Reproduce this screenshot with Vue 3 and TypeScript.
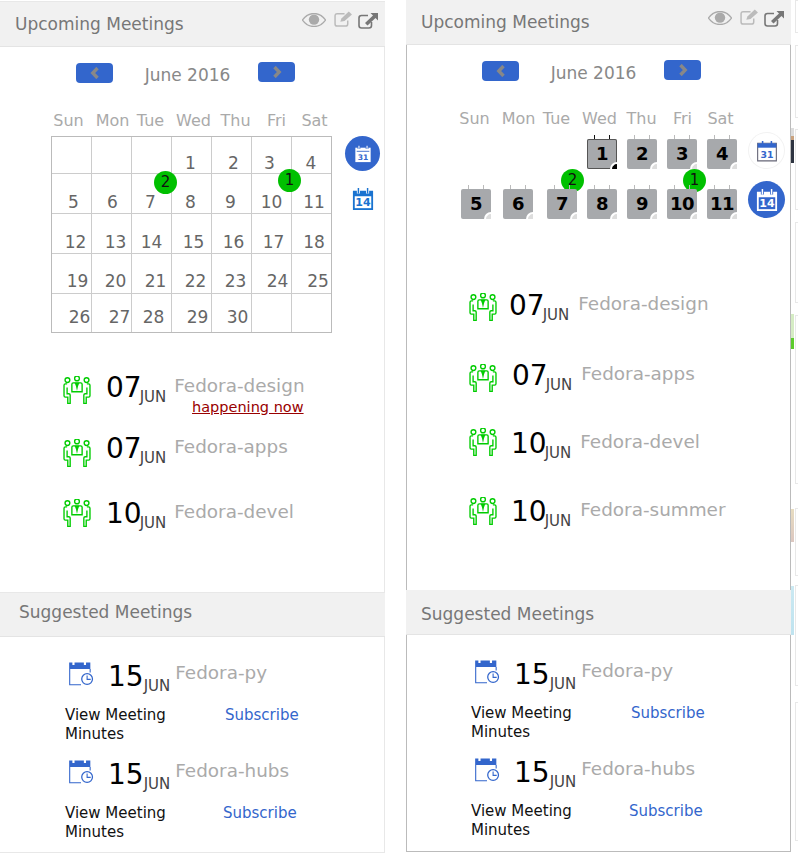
<script setup lang="ts">
const weekdays = [
  { label: "Sun", dx: 0 },
  { label: "Mon", dx: 3 },
  { label: "Tue", dx: 0 },
  { label: "Wed", dx: 2 },
  { label: "Thu", dx: 3 },
  { label: "Fri", dx: 3 },
  { label: "Sat", dx: 0 },
];

// grid cells of the left calendar, the second value nudges the number off the cell centre
const gridRows = [
  { height: 37, dy: 5, cells: [null, null, null, [1, -1], [2, 2], [3, -2], [4, -1]] },
  { height: 40, dy: 4, cells: [[5, 2], [6, 1], [7, -1], [8, -1], [9, -1], [10, 0], [11, 2]] },
  { height: 40, dy: 4, cells: [[12, 4], [13, 4], [14, 0], [15, 2], [16, 2], [17, 2], [18, 2]] },
  { height: 40, dy: 3, cells: [[19, 6], [20, 4], [21, 4], [22, 4], [23, 4], [24, 6], [25, 6]] },
  { height: 38, dy: 0, cells: [[26, 8], [27, 8], [28, 2], [29, 6], [30, 6], null, null] },
];

const gridBadges = [
  { n: 2, x: 102, y: 34 },
  { n: 1, x: 226, y: 32 },
];
const tileBadges = [
  { n: 2, x: 155, y: 40 },
  { n: 1, x: 277, y: 40 },
];

const tileRows = [
  [
    { n: 1, left: 181, active: true },
    { n: 2, left: 10 },
    { n: 3, left: 10 },
    { n: 4, left: 10 },
  ],
  [
    { n: 5, left: 55 },
    { n: 6, left: 12 },
    { n: 7, left: 14 },
    { n: 8, left: 10 },
    { n: 9, left: 10 },
    { n: 10, left: 10 },
    { n: 11, left: 10 },
  ],
];

const leftMeetings = [
  { day: "07", name: "Fedora-design", top: 38, icon: 5, gap: 15, now: true },
  { day: "07", name: "Fedora-apps", top: 15, icon: 7, gap: 15 },
  { day: "10", name: "Fedora-devel", top: 19, icon: 2, gap: 15 },
];
const rightMeetings = [
  { day: "07", name: "Fedora-design", top: 66, icon: 4, gap: 12 },
  { day: "07", name: "Fedora-apps", top: 28, icon: 5, gap: 15 },
  { day: "10", name: "Fedora-devel", top: 26, icon: 1, gap: 14 },
  { day: "10", name: "Fedora-summer", top: 26, icon: 2, gap: 14 },
];

const suggested = [
  { day: "15", name: "Fedora-py", subLeft: 0 },
  { day: "15", name: "Fedora-hubs", subLeft: -2 },
];

// sliver of the next column that shows at the window's right edge
const strip = [
  { top: 0, height: 33 },
  { top: 12, height: 73 },
  { top: 11, height: 81, thumb: "linear-gradient(#ddd 0 22%, #c9a27e 22% 35%, #2d3340 35%)", thumbTop: -2, thumbHeight: 35 },
  { top: 12, height: 81 },
  { top: 12, height: 169, thumb: "linear-gradient(#d5ecc4 0 70%, #5ccb2c 70%)", thumbTop: -2, thumbHeight: 35 },
  { top: 24, height: 68, thumb: "linear-gradient(#e7dcc0, #dcc7c0)", thumbTop: 0, thumbHeight: 33 },
  { top: 9, height: 101, thumb: "linear-gradient(#cbe9f2, #bfe3ef)", thumbTop: 0, thumbHeight: 49 },
  { top: 16, height: 139 },
];
</script>

<template>
  <div class="page">
    <!-- left panel: grid calendar -->
    <section class="panel panel-left">
      <header class="head">
        <span>Upcoming Meetings</span>
        <div class="tools">
          <svg class="eye" viewBox="0 0 24 14"><path d="M0.5 7C4 2 8 .5 12 .5S20 2 23.5 7C20 12 16 13.5 12 13.5S4 12 .5 7Z" fill="none" stroke="#aaa" stroke-width="1.3"/><circle cx="12" cy="6.6" r="5.2" fill="#aaa"/></svg>
          <svg class="edit" viewBox="0 0 18 15"><path d="M10 2.5H3Q1 2.5 1 4.5V12.2Q1 14.2 3 14.2H11Q13 14.2 13 12.2V9" fill="none" stroke="#bbb" stroke-width="1.4"/><path d="M6 10L7 7L14 0.5L17 3.2L10 9.5Z" fill="#bbb"/></svg>
          <svg class="ext" viewBox="0 0 20 17"><path d="M10 3.5H3.5Q1 3.5 1 6V13.5Q1 16 3.5 16H11Q13.5 16 13.5 13.5V10" fill="none" stroke="#777" stroke-width="1.6"/><path d="M7 11L15 3.5L12.5 1H20V8.5L17.5 6L9.5 13.5Z" fill="#777"/></svg>
        </div>
      </header>
      <div class="body upcoming">
        <div class="month">
          <button class="nav"><svg viewBox="0 0 10 12"><path d="M7.5 1L2.8 6L7.5 11" fill="none" stroke="#888" stroke-width="3.4"/></svg></button>
          <span class="month-name">June 2016</span>
          <button class="nav nav-next"><svg viewBox="0 0 10 12"><path d="M2.5 1L7.2 6L2.5 11" fill="none" stroke="#888" stroke-width="3.4"/></svg></button>
        </div>
        <div class="weekdays"><span v-for="d in weekdays" :key="d.label" :style="{ transform: `translateX(${d.dx}px)` }">{{ d.label }}</span></div>

        <div class="cal-wrap">
          <div class="grid">
            <div v-for="(row, r) in gridRows" :key="r" class="grid-row" :style="{ height: row.height + 'px' }">
              <div v-for="(cell, c) in row.cells" :key="c" class="grid-cell">
                <span v-if="cell" :style="{ transform: `translate(${cell[1]}px, ${row.dy}px)` }">{{ cell[0] }}</span>
              </div>
            </div>
            <i v-for="b in gridBadges" :key="b.n" class="badge" :style="{ left: b.x + 'px', top: b.y + 'px' }">{{ b.n }}</i>
          </div>
          <div class="views">
            <span class="view-btn view-on">
              <svg viewBox="0 0 20 20"><path d="M1.5 3H18.5V19H1.5Z" fill="#fff"/><path d="M3 7H17" stroke="#3366cc" stroke-width="1"/><path d="M5.5 .8V4.5M14.5 .8V4.5" stroke="#3366cc" stroke-width="3"/><path d="M5.5 .8V4.5M14.5 .8V4.5" stroke="#fff" stroke-width="1.2"/><text x="10" y="16.6" class="ico-num" fill="#3366cc">31</text></svg>
            </span>
            <span class="view-btn view-14-plain">
              <svg viewBox="0 0 24 26"><path d="M1 4H23V25H1Z" fill="#1a73d0"/><rect x="3" y="10" width="18" height="13" fill="#fff"/><path d="M7 1V7M17 1V7" stroke="#fff" stroke-width="3.4"/><path d="M7 1V7M17 1V7" stroke="#1a73d0" stroke-width="1.6"/><text x="12" y="21" class="ico-num big" fill="#1a73d0">14</text></svg>
            </span>
          </div>
        </div>

        <div v-for="m in leftMeetings" :key="m.name" class="meeting" :style="{ marginTop: m.top + 'px' }">
          <svg class="people" viewBox="24 26 82 82" :style="{ marginTop: m.icon + 'px' }">
            <g fill="none" stroke="#00cc00" stroke-width="4">
              <circle cx="37" cy="38" r="7"/><circle cx="65" cy="33" r="7"/><circle cx="93" cy="38" r="7"/>
              <path d="M36 49H31Q27 49 27 53V84Q27 88 31 88H38V106H45V82Q45 78 41 78H36V60"/>
              <path d="M94 49H99Q103 49 103 53V84Q103 88 99 88H92V106H85V82Q85 78 89 78H94V60"/>
              <path d="M50 72V50Q50 46 54 46H76Q80 46 80 50V72Z"/>
            </g>
            <path d="M58 46H72L68 56L65 70L62 56Z" fill="#00cc00"/>
          </svg>
          <span class="day" :style="{ marginLeft: m.gap + 'px' }">{{ m.day }}</span><span class="mon">JUN</span>
          <div class="name-col">
            <span class="name">{{ m.name }}</span>
            <a v-if="m.now" class="now">happening now</a>
          </div>
        </div>
      </div>
      <header class="head head-second">Suggested Meetings</header>
      <div class="body suggested">
        <div v-for="s in suggested" :key="s.name" class="sug">
          <div class="sug-top">
            <svg class="cal-clock" viewBox="24 20 72 78">
              <path d="M27 45V27H36V34H42V27H68V34H74V27H86V45Z" fill="#3366cc"/>
              <path d="M28.5 45V89H60M85.5 45V55" fill="none" stroke="#3366cc" stroke-width="3"/>
              <circle cx="77" cy="73" r="15" fill="#fff" stroke="#3366cc" stroke-width="3.5"/>
              <path d="M77 63V74H87" fill="none" stroke="#3366cc" stroke-width="3"/>
            </svg>
            <span class="day">{{ s.day }}</span><span class="mon">JUN</span>
            <span class="name">{{ s.name }}</span>
          </div>
          <div class="sug-links">
            <a class="minutes">View Meeting Minutes</a>
            <a class="subscribe" :style="{ marginLeft: s.subLeft + 'px' }">Subscribe</a>
          </div>
        </div>
      </div>
    </section>

    <!-- right panel: tile calendar -->
    <section class="panel panel-right">
      <header class="head">
        <span>Upcoming Meetings</span>
        <div class="tools">
          <svg class="eye" viewBox="0 0 24 14"><path d="M0.5 7C4 2 8 .5 12 .5S20 2 23.5 7C20 12 16 13.5 12 13.5S4 12 .5 7Z" fill="none" stroke="#aaa" stroke-width="1.3"/><circle cx="12" cy="6.6" r="5.2" fill="#aaa"/></svg>
          <svg class="edit" viewBox="0 0 18 15"><path d="M10 2.5H3Q1 2.5 1 4.5V12.2Q1 14.2 3 14.2H11Q13 14.2 13 12.2V9" fill="none" stroke="#bbb" stroke-width="1.4"/><path d="M6 10L7 7L14 0.5L17 3.2L10 9.5Z" fill="#bbb"/></svg>
          <svg class="ext" viewBox="0 0 20 17"><path d="M10 3.5H3.5Q1 3.5 1 6V13.5Q1 16 3.5 16H11Q13.5 16 13.5 13.5V10" fill="none" stroke="#777" stroke-width="1.6"/><path d="M7 11L15 3.5L12.5 1H20V8.5L17.5 6L9.5 13.5Z" fill="#777"/></svg>
        </div>
      </header>
      <div class="body upcoming">
        <div class="month">
          <button class="nav"><svg viewBox="0 0 10 12"><path d="M7.5 1L2.8 6L7.5 11" fill="none" stroke="#888" stroke-width="3.4"/></svg></button>
          <span class="month-name">June 2016</span>
          <button class="nav nav-next"><svg viewBox="0 0 10 12"><path d="M2.5 1L7.2 6L2.5 11" fill="none" stroke="#888" stroke-width="3.4"/></svg></button>
        </div>
        <div class="weekdays"><span v-for="d in weekdays" :key="d.label" :style="{ transform: `translateX(${d.dx}px)` }">{{ d.label }}</span></div>

        <div class="tiles-wrap">
          <div v-for="(row, r) in tileRows" :key="r" class="tile-row">
            <div v-for="t in row" :key="t.n" class="tile" :class="{ active: t.active }" :style="{ marginLeft: t.left + 'px' }">{{ t.n }}</div>
          </div>
          <i v-for="b in tileBadges" :key="b.n" class="badge" :style="{ left: b.x + 'px', top: b.y + 'px' }">{{ b.n }}</i>
          <span class="view-btn view-plain">
            <svg viewBox="0 0 20 20"><path d="M1.5 3H18.5V19H1.5Z" fill="#fff" stroke="#667" stroke-width="1"/><path d="M1.5 3H18.5V7H1.5Z" fill="#3366cc"/><path d="M6 1V4M14 1V4" stroke="#3366cc" stroke-width="1.4"/><text x="10" y="16.6" class="ico-num" fill="#3366cc">31</text></svg>
          </span>
          <span class="view-btn view-on view-14">
            <svg viewBox="0 0 24 26"><path d="M1 4H23V25H1Z" fill="#fff"/><rect x="3" y="10" width="18" height="13" fill="#3366cc"/><path d="M7 1V7M17 1V7" stroke="#3366cc" stroke-width="3.4"/><path d="M7 1V7M17 1V7" stroke="#fff" stroke-width="1.6"/><text x="12" y="21" class="ico-num big" fill="#fff">14</text></svg>
          </span>
        </div>

        <div v-for="m in rightMeetings" :key="m.name" class="meeting meeting-plain" :style="{ marginTop: m.top + 'px' }">
          <svg class="people" viewBox="24 26 82 82" :style="{ marginTop: m.icon + 'px' }">
            <g fill="none" stroke="#00cc00" stroke-width="4">
              <circle cx="37" cy="38" r="7"/><circle cx="65" cy="33" r="7"/><circle cx="93" cy="38" r="7"/>
              <path d="M36 49H31Q27 49 27 53V84Q27 88 31 88H38V106H45V82Q45 78 41 78H36V60"/>
              <path d="M94 49H99Q103 49 103 53V84Q103 88 99 88H92V106H85V82Q85 78 89 78H94V60"/>
              <path d="M50 72V50Q50 46 54 46H76Q80 46 80 50V72Z"/>
            </g>
            <path d="M58 46H72L68 56L65 70L62 56Z" fill="#00cc00"/>
          </svg>
          <span class="day" :style="{ marginLeft: m.gap + 'px' }">{{ m.day }}</span><span class="mon">JUN</span>
          <div class="name-col"><span class="name">{{ m.name }}</span></div>
        </div>
      </div>
      <header class="head head-second">Suggested Meetings</header>
      <div class="body suggested">
        <div v-for="s in suggested" :key="s.name" class="sug">
          <div class="sug-top">
            <svg class="cal-clock" viewBox="24 20 72 78">
              <path d="M27 45V27H36V34H42V27H68V34H74V27H86V45Z" fill="#3366cc"/>
              <path d="M28.5 45V89H60M85.5 45V55" fill="none" stroke="#3366cc" stroke-width="3"/>
              <circle cx="77" cy="73" r="15" fill="#fff" stroke="#3366cc" stroke-width="3.5"/>
              <path d="M77 63V74H87" fill="none" stroke="#3366cc" stroke-width="3"/>
            </svg>
            <span class="day">{{ s.day }}</span><span class="mon">JUN</span>
            <span class="name">{{ s.name }}</span>
          </div>
          <div class="sug-links">
            <a class="minutes">View Meeting Minutes</a>
            <a class="subscribe" :style="{ marginLeft: s.subLeft + 'px' }">Subscribe</a>
          </div>
        </div>
      </div>
    </section>

    <div class="strip">
      <div v-for="(b, i) in strip" :key="i" class="strip-box" :style="{ marginTop: b.top + 'px', height: b.height + 'px' }">
        <span v-if="b.thumb" class="thumb" :style="{ background: b.thumb, top: b.thumbTop + 'px', height: b.thumbHeight + 'px' }"></span>
      </div>
    </div>
  </div>
</template>

<style>
html, body { margin: 0; background: #fff; overflow: hidden; }
</style>

<style scoped>
.page {
  display: flex;
  align-items: flex-start;
  gap: 21px;
  width: 798px;
  height: 853px;
  overflow: hidden;
  font-family: "DejaVu Sans", sans-serif;
  background: #fff;
}

.panel { position: relative; width: 385px; flex: none; }
.panel-left { height: 853px; padding-top: 2px; box-sizing: border-box; }
.panel-left::before {
  content: "";
  position: absolute;
  left: 0;
  right: 0;
  top: 1px;
  bottom: 0;
  border-top: 1px solid #e8e8e8;
  border-right: 1px solid #e8e8e8;
  border-bottom: 1px solid #e8e8e8;
  pointer-events: none;
}
.panel-right { height: 852px; }
.panel-right::before {
  content: "";
  position: absolute;
  left: 0;
  right: 0;
  top: 32px;
  bottom: 0;
  border: 1px solid #bbb;
  pointer-events: none;
}

.head {
  display: flex;
  align-items: center;
  justify-content: space-between;
  box-sizing: border-box;
  height: 45px;
  padding: 0 7px 0 15px;
  background: #f1f1f1;
  border-bottom: 1px solid #e4e4e4;
  color: #777;
  font-size: 17px;
  position: relative;
  z-index: 1;
}
.tools { display: flex; align-items: flex-start; height: 30px; }
.eye { width: 24px; height: 14px; margin-top: 4px; }
.edit { width: 19px; height: 16px; margin: 2px 0 0 8px; }
.ext { width: 20px; height: 17px; margin: 3px 0 0 5px; }

.upcoming { height: 545px; }
.month { position: relative; display: flex; align-items: center; height: 22px; padding: 15px 0 0 76px; }
.nav {
  width: 37px;
  height: 20px;
  padding: 0;
  border: 0;
  border-radius: 4px;
  background: #3366cc;
  display: flex;
  align-items: center;
  justify-content: center;
}
.nav svg { width: 10px; height: 12px; }
.nav-next { margin: -2px 0 0 0; }
.month-name { width: 145px; padding-left: 4px; box-sizing: border-box; text-align: center; color: #888; font-size: 17px; transform: translateY(2px); }

.weekdays {
  display: grid;
  grid-template-columns: repeat(7, 41px);
  padding: 27px 0 0 48px;
  color: #aaa;
  font-size: 16px;
  line-height: 20px;
  text-align: center;
}

.cal-wrap { display: flex; align-items: flex-start; padding: 5px 0 0 51px; }
.grid { position: relative; width: 281px; border: 1px solid #bbb; box-sizing: border-box; }
.grid-row { display: flex; border-bottom: 1px solid #ccc; box-sizing: border-box; }
.grid-row:last-of-type { border-bottom: 0; }
.grid-cell {
  width: 40px;
  flex: none;
  box-sizing: border-box;
  border-right: 1px solid #ccc;
  display: flex;
  align-items: flex-end;
  justify-content: center;
  padding-bottom: 4px;
  color: #666;
  font-size: 17px;
  line-height: 22px;
}
.grid-cell:last-child { border-right: 0; }

.badge {
  position: absolute;
  width: 23px;
  height: 23px;
  border-radius: 50%;
  background: #00c000;
  color: #111;
  font-style: normal;
  font-size: 15px;
  line-height: 23px;
  text-align: center;
}

.views { display: flex; flex-direction: column; align-items: center; margin-left: 13px; gap: 10px; }
.view-btn { display: flex; align-items: center; justify-content: center; width: 35px; height: 35px; border-radius: 50%; flex: none; }
.view-btn svg { width: 22px; height: 24px; }
.view-on { background: #3366cc; }
.view-on svg { width: 18px; height: 18px; }
.ico-num { font-family: "DejaVu Sans", sans-serif; font-size: 8.5px; font-weight: 700; text-anchor: middle; }
.ico-num.big { font-size: 12px; }

.meeting { display: flex; align-items: flex-start; height: 46px; padding-left: 63px; position: relative; }
.meeting-plain { height: 42px; }
.people { width: 28px; height: 28px; flex: none; }
.day { font-size: 28px; line-height: 34px; color: #000; margin-left: 15px; }
.mon { font-size: 15px; line-height: 18px; color: #444; margin: 17px 0 0 -2px; }
.name-col { display: flex; flex-direction: column; align-items: flex-end; margin: 3px 0 0 8px; }
.meeting-plain .name-col { margin-left: 9px; }
.name { font-size: 18.4px; line-height: 24px; color: #aaa; }
.now { font-size: 14.5px; line-height: 18px; color: #990000; text-decoration: underline; margin-right: 1px; }

.head-second { padding-left: 19px; padding-bottom: 6px; border-top: 1px solid #e8e8e8; }
.panel-right .head-second { padding: 4px 7px 0 15px; border-top: 0; }
.suggested { padding-top: 23px; }
.sug { padding-left: 65px; height: 98px; box-sizing: border-box; }
.sug-top { display: flex; align-items: flex-start; height: 40px; padding-left: 3px; }
.cal-clock { width: 26px; height: 28px; flex: none; }
.sug .day { margin-left: 14px; }
.sug .mon { margin-left: 0; }
.sug .name { margin: 1px 0 0 5px; }
.sug-links { display: flex; align-items: flex-start; padding-top: 6px; font-size: 15px; line-height: 19px; }
.minutes { width: 112px; color: #111; flex: none; }
.subscribe { color: #3366cc; padding-left: 48px; }

.tiles-wrap { position: relative; height: 94px; padding-top: 10px; box-sizing: border-box; }
.tile-row { display: flex; height: 50px; }
.tile {
  position: relative;
  z-index: 1;
  width: 30px;
  height: 30px;
  flex: none;
  background: #a7a9ac;
  border-radius: 2px;
  font-size: 18px;
  font-weight: 700;
  letter-spacing: -0.5px;
  line-height: 30px;
  text-align: center;
  color: #000;
}
.tile::before {
  content: "";
  position: absolute;
  left: 7px;
  top: -4px;
  width: 14px;
  height: 4px;
  border-left: 1px solid #bbb;
  border-right: 1px solid #bbb;
}
.tile::after {
  content: "";
  position: absolute;
  right: 0;
  bottom: 0;
  width: 7px;
  height: 7px;
  box-sizing: border-box;
  background: #ddd;
  border-top: 2px solid #fff;
  border-left: 2px solid #fff;
  border-top-left-radius: 7px;
}
.tile.active { box-shadow: inset 0 0 0 1px #555; }
.tile.active::before { border-color: #111; }
.tile.active::after { background: #000; }
.view-plain { position: absolute; left: 343px; top: 4px; box-shadow: 0 0 0 1px #f2f2f2; }
.view-14 { position: absolute; left: 342px; top: 52px; width: 37px; height: 37px; }
.view-14 svg { width: 22px; height: 24px; }

.strip { flex: none; width: 6px; margin-left: -20px; display: flex; flex-direction: column; }
.strip-box {
  position: relative;
  box-sizing: border-box;
  margin-left: 3px;
  width: 10px;
  flex: none;
  border: 1px solid #e8e8e8;
}
.thumb { position: absolute; left: -5px; width: 3px; }
</style>
